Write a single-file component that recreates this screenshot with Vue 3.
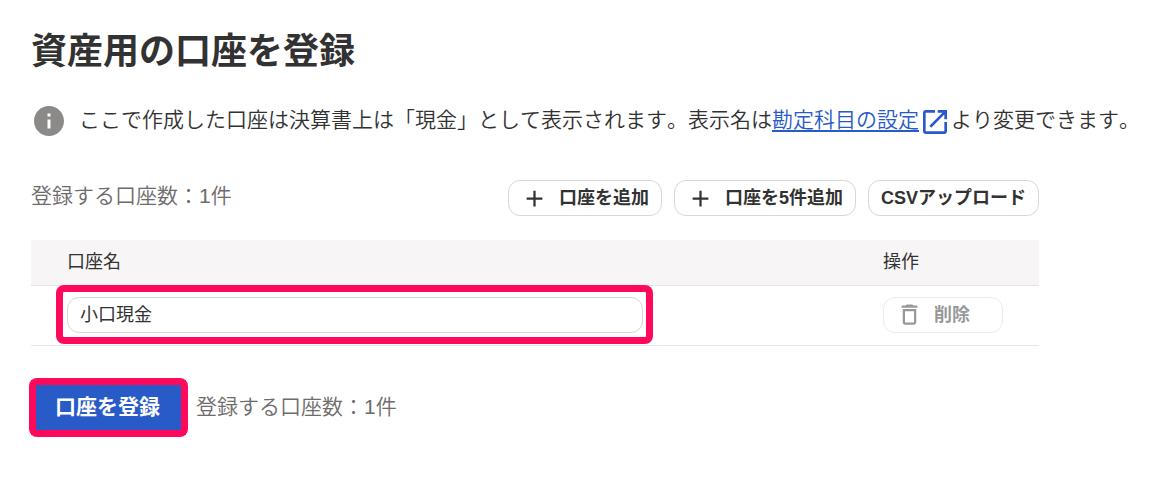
<template>
  <main class="page">
    <h1 class="title">資産用の口座を登録</h1>

    <div class="note">
      <svg class="note-icon" viewBox="0 0 24 24" aria-hidden="true">
        <path d="M12 2C6.48 2 2 6.48 2 12s4.48 10 10 10 10-4.48 10-10S17.52 2 12 2zm1 15h-2v-6h2v6zm0-8h-2V7h2v2z" />
      </svg>
      <p class="note-text">ここで作成した口座は決算書上は「現金」として表示されます。表示名は<a href="#">勘定科目の設定</a><svg class="link-icon" viewBox="0 0 24 24" aria-hidden="true">
          <path d="M19 19H5V5h7V3H5c-1.11 0-2 .9-2 2v14c0 1.1.89 2 2 2h14c1.1 0 2-.9 2-2v-7h-2v7zM14 3v2h3.59l-9.83 9.83 1.41 1.41L19 6.41V10h2V3h-7z" />
        </svg>より変更できます。</p>
    </div>

    <section class="content">
      <div class="toolbar">
        <span class="count">登録する口座数：{{ accounts.length }}件</span>
        <div class="actions">
          <button type="button" class="btn" @click="addAccounts(1)">
            <svg class="btn-icon" viewBox="0 0 24 24" aria-hidden="true">
              <path d="M19 13h-6v6h-2v-6H5v-2h6V5h2v6h6v2z" />
            </svg>
            <span class="btn-label">口座を追加</span>
          </button>
          <button type="button" class="btn" @click="addAccounts(5)">
            <svg class="btn-icon" viewBox="0 0 24 24" aria-hidden="true">
              <path d="M19 13h-6v6h-2v-6H5v-2h6V5h2v6h6v2z" />
            </svg>
            <span class="btn-label">口座を5件追加</span>
          </button>
          <button type="button" class="btn">
            <span class="btn-label">CSVアップロード</span>
          </button>
        </div>
      </div>

      <table class="table">
        <thead>
          <tr>
            <th id="col-name">口座名</th>
            <th class="col-action">操作</th>
          </tr>
        </thead>
        <tbody>
          <tr v-for="(account, index) in accounts" :key="account.id">
            <td>
              <div class="field" :class="{ marked: index === 0 }">
                <input v-model="account.name" type="text" class="input" aria-labelledby="col-name" />
              </div>
            </td>
            <td>
              <button
                type="button"
                class="btn btn-delete"
                :disabled="accounts.length === 1"
                @click="removeAccount(index)"
              >
                <svg class="btn-icon" viewBox="0 0 24 24" aria-hidden="true">
                  <path d="M6 19c0 1.1.9 2 2 2h8c1.1 0 2-.9 2-2V7H6v12zM8 9h8v10H8V9zm7.5-5l-1-1h-5l-1 1H5v2h14V4h-3.5z" />
                </svg>
                <span class="btn-label">削除</span>
              </button>
            </td>
          </tr>
        </tbody>
      </table>

      <div class="footer">
        <button type="button" class="submit marked">口座を登録</button>
        <span class="count">登録する口座数：{{ accounts.length }}件</span>
      </div>
    </section>
  </main>
</template>

<script setup>
import { ref } from 'vue';

let nextId = 2;
const accounts = ref([{ id: 1, name: '小口現金' }]);

function addAccounts(count) {
  for (let i = 0; i < count; i++) {
    accounts.value.push({ id: nextId++, name: '' });
  }
}

function removeAccount(index) {
  accounts.value.splice(index, 1);
}
</script>

<style>
body {
  background: #fff;
}
</style>

<style scoped>
.page {
  padding: 26px 31px;
  color: #323232;
  font-family: "Liberation Sans", "Noto Sans CJK JP", sans-serif;
  font-size: 18px;
  font-kerning: none;
}

.title {
  margin: 0;
  font-size: 36px;
  line-height: 52px;
}

.note {
  display: flex;
  align-items: center;
  gap: 12px;
  margin-top: 22px;
  height: 42px;
}

.note-icon {
  flex: none;
  width: 36px;
  height: 36px;
  fill: #8c8989;
}

.note-text {
  margin: 0;
  font-size: 21px;
  font-weight: 350;
  line-height: 32px;
  white-space: nowrap;
}

.note-text a {
  color: #285ac8;
  text-decoration-thickness: 2px;
  text-underline-offset: 3px;
}

.link-icon {
  width: 32px;
  height: 32px;
  fill: #285ac8;
  vertical-align: middle;
}

/* 本文の幅 */
.content {
  max-width: 1008px;
  margin-right: 101px;
}

.toolbar {
  display: flex;
  justify-content: space-between;
  align-items: flex-start;
  margin-top: 38px;
}

.count {
  color: #6e6b6b;
  font-size: 21px;
  font-weight: 350;
  line-height: 32px;
}

.actions {
  display: flex;
  gap: 12px;
}

.btn {
  display: flex;
  align-items: center;
  gap: 11px;
  box-sizing: border-box;
  height: 36px;
  padding: 0 12px;
  border: 1px solid #d7d7d7;
  border-radius: 12px;
  background: #fff;
  color: #323232;
  font: inherit;
  font-weight: bold;
  white-space: nowrap;
}

.btn-icon {
  flex: none;
  width: 27px;
  height: 27px;
  fill: currentColor;
}

.btn-label {
  padding-bottom: 4px;
}

.btn-delete {
  width: 120px;
}

.btn-delete:disabled {
  border-color: #ebebeb;
  color: #989898;
}

.table {
  width: 100%;
  margin-top: 24px;
  border-collapse: collapse;
  table-layout: fixed;
}

.table th {
  box-sizing: border-box;
  height: 45px;
  padding: 0 36px 4px;
  border-bottom: 1px solid #e6e6e6;
  background: #f7f5f6;
  font-weight: normal;
  text-align: left;
}

.table .col-action {
  width: 192px;
}

.table td {
  padding: 11px 36px 12px;
  border-bottom: 1px solid #e6e6e6;
}

.field {
  max-width: 576px;
}

.input {
  display: block;
  box-sizing: border-box;
  width: 100%;
  height: 36px;
  padding: 0 12px 3px;
  border: 1px solid #d7d7d7;
  border-radius: 12px;
  background: #fff;
  color: #323232;
  font: inherit;
}

/* 操作箇所を示す赤枠 */
.marked {
  position: relative;
}

.marked::after {
  content: "";
  position: absolute;
  inset: -12px -10px -11px -11px;
  border: 7px solid #ff0a5a;
  border-radius: 8px;
  pointer-events: none;
}

.footer {
  display: flex;
  align-items: center;
  gap: 10px;
  margin-top: 34px;
}

.submit {
  height: 55px;
  padding: 0 26px 4px 24px;
  border: 0;
  background: #285ac8;
  color: #fff;
  font: inherit;
  font-size: 21px;
  font-weight: bold;
}

.submit::after {
  inset: -2px;
}
</style>
